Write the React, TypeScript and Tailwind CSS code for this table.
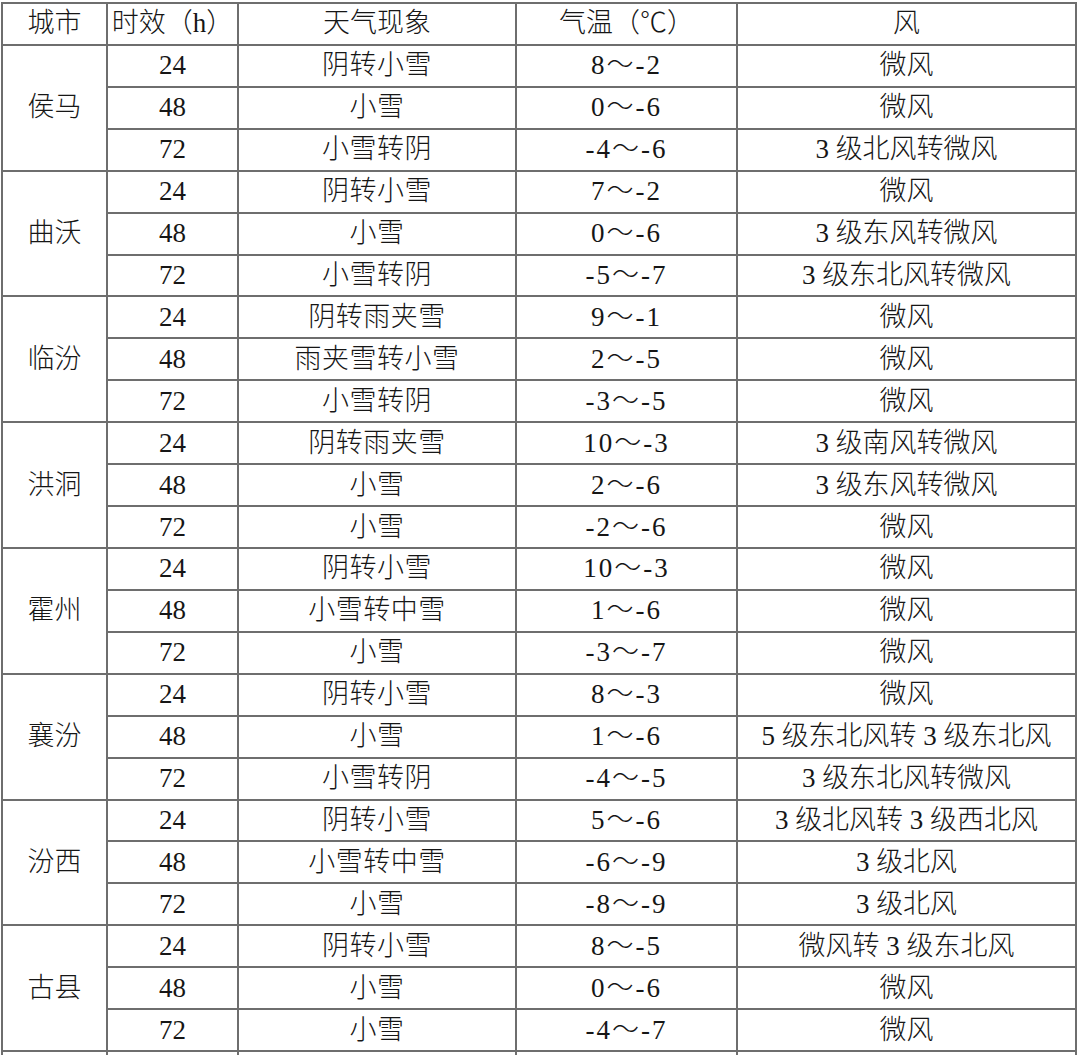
import React from "react";

type Row = [string, string, string, string];
const groups: { city: string; rows: Row[] }[] = [
  { city: "侯马", rows: [["24", "阴转小雪", "8～-2", "微风"], ["48", "小雪", "0～-6", "微风"], ["72", "小雪转阴", "-4～-6", "3 级北风转微风"]] },
  { city: "曲沃", rows: [["24", "阴转小雪", "7～-2", "微风"], ["48", "小雪", "0～-6", "3 级东风转微风"], ["72", "小雪转阴", "-5～-7", "3 级东北风转微风"]] },
  { city: "临汾", rows: [["24", "阴转雨夹雪", "9～-1", "微风"], ["48", "雨夹雪转小雪", "2～-5", "微风"], ["72", "小雪转阴", "-3～-5", "微风"]] },
  { city: "洪洞", rows: [["24", "阴转雨夹雪", "10～-3", "3 级南风转微风"], ["48", "小雪", "2～-6", "3 级东风转微风"], ["72", "小雪", "-2～-6", "微风"]] },
  { city: "霍州", rows: [["24", "阴转小雪", "10～-3", "微风"], ["48", "小雪转中雪", "1～-6", "微风"], ["72", "小雪", "-3～-7", "微风"]] },
  { city: "襄汾", rows: [["24", "阴转小雪", "8～-3", "微风"], ["48", "小雪", "1～-6", "5 级东北风转 3 级东北风"], ["72", "小雪转阴", "-4～-5", "3 级东北风转微风"]] },
  { city: "汾西", rows: [["24", "阴转小雪", "5～-6", "3 级北风转 3 级西北风"], ["48", "小雪转中雪", "-6～-9", "3 级北风"], ["72", "小雪", "-8～-9", "3 级北风"]] },
  { city: "古县", rows: [["24", "阴转小雪", "8～-5", "微风转 3 级东北风"], ["48", "小雪", "0～-6", "微风"], ["72", "小雪", "-4～-7", "微风"]] },
];

const cell = "bg-white flex items-center justify-center whitespace-nowrap";

export default function App() {
  const headers = ["城市", "时效（h）", "天气现象", "气温（℃）", "风"];
  return (
    <div className="w-[1080px] h-[1055px] bg-white overflow-hidden">
      <div
        className="ml-[1px] mt-[2px] w-[1076px] h-[1092px] bg-[#6e6e6e] p-[2px] grid gap-[2px] grid-cols-[103px_129px_276px_219px_337px] grid-rows-[repeat(26,minmax(0,1fr))] text-[27px] leading-none font-light text-[#161616]"
        style={{ fontFamily: '"Liberation Serif", "Noto Sans CJK SC", serif' }}
      >
        {headers.map((h) => (
          <div key={h} className={cell}>{h}</div>
        ))}
        {groups.map((g) => (
          <React.Fragment key={g.city}>
            <div className={`${cell} row-span-3`}>{g.city}</div>
            {g.rows.map((r, i) => (
              <React.Fragment key={i}>
                <div className={cell}>{r[0]}</div>
                <div className={`${cell} tracking-[0.5px]`}>{r[1]}</div>
                <div className={`${cell} tracking-[2px]`}>{r[2]}</div>
                <div className={cell}>{r[3]}</div>
              </React.Fragment>
            ))}
          </React.Fragment>
        ))}
        {[0, 1, 2, 3, 4].map((k) => (
          <div key={`e${k}`} className={cell}></div>
        ))}
      </div>
    </div>
  );
}
